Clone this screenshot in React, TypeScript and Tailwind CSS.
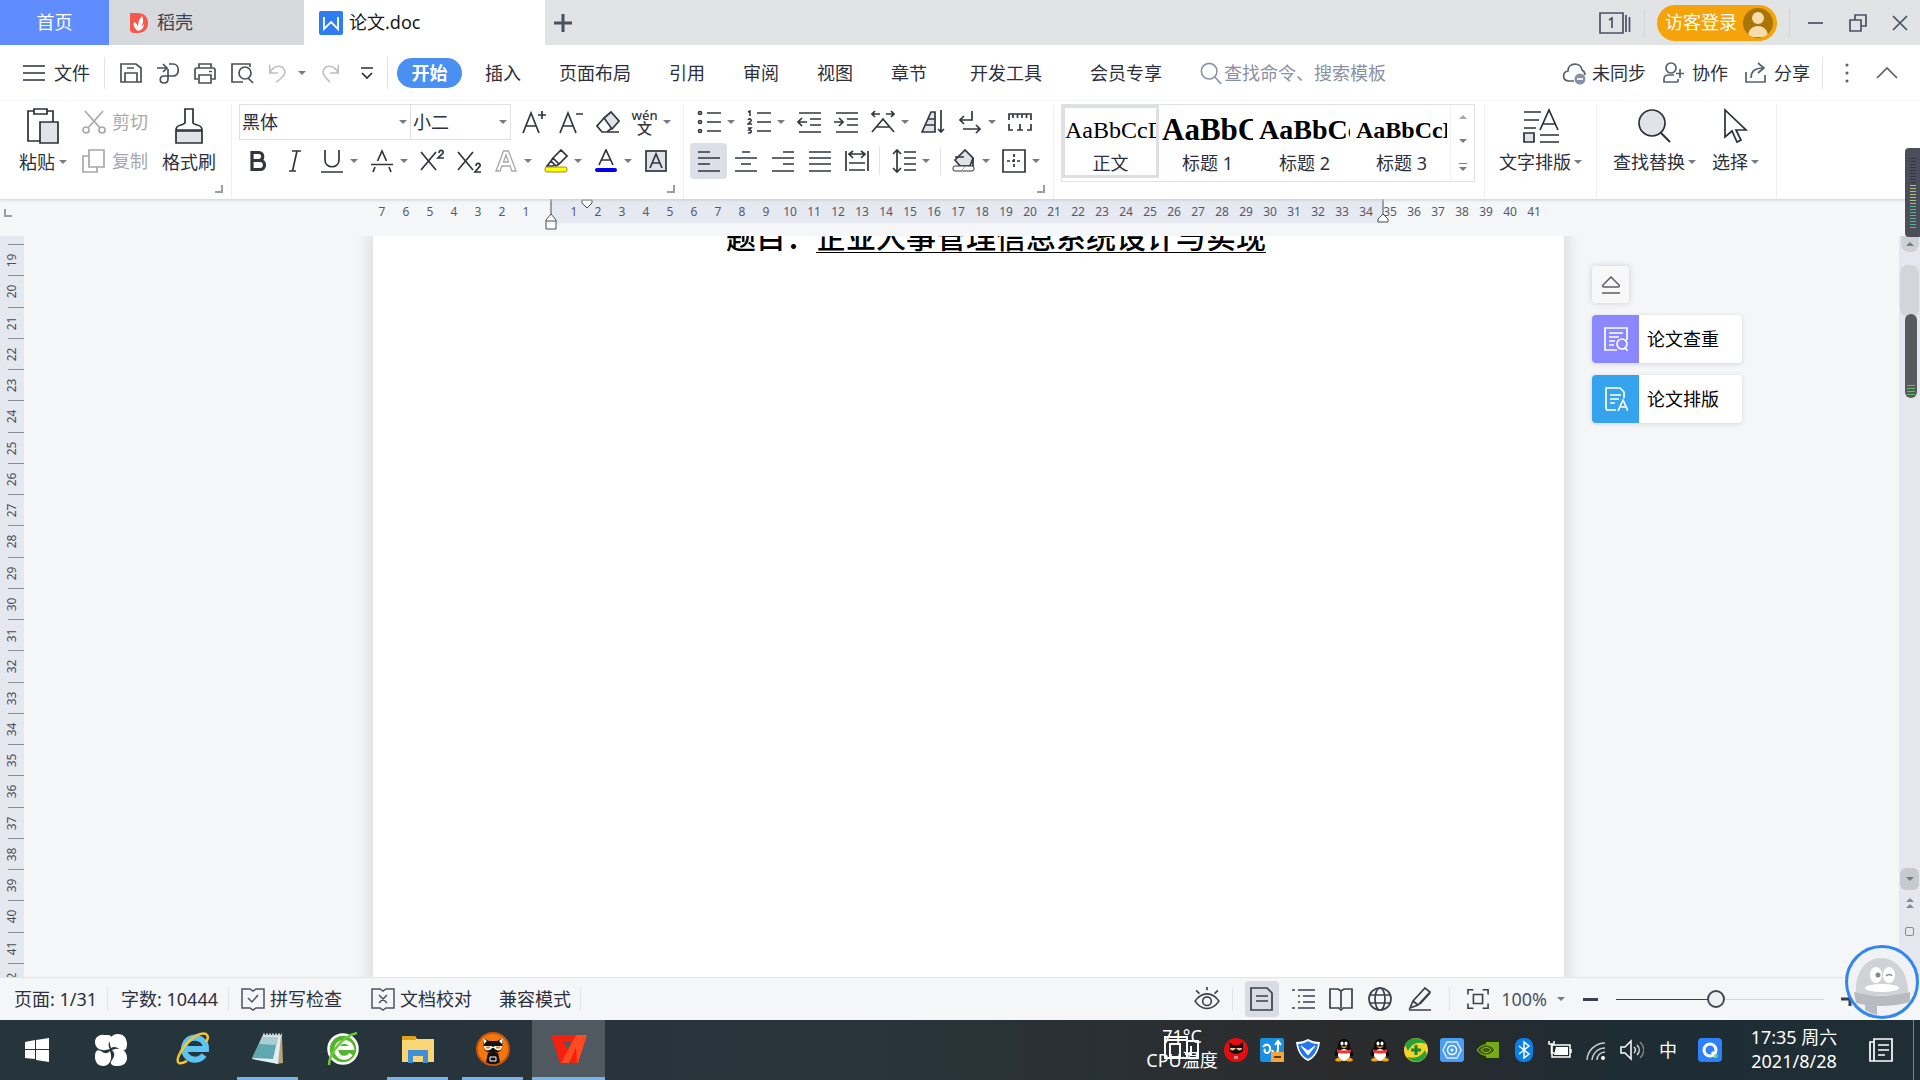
import React from "react";

type IconProps = {
  children: React.ReactNode;
  className?: string;
  box?: string;
};

const Icon = ({ children, className = "size-6", box = "0 0 24 24" }: IconProps) => (
  <svg
    viewBox={box}
    className={`shrink-0 ${className}`}
    fill="none"
    stroke="currentColor"
    strokeWidth="1.7"
    aria-hidden="true"
  >
    {children}
  </svg>
);

const Caret = ({ className = "text-[#777b84]" }: { className?: string }) => (
  <svg viewBox="0 0 8 4" className={`h-1 w-2 shrink-0 ${className}`} fill="currentColor" aria-hidden="true">
    <path d="M0 0h8L4 4z" />
  </svg>
);

type ToolProps = {
  label: string;
  caret?: boolean;
  active?: boolean;
  children: React.ReactNode;
};

const Tool = ({ label, caret, active, children }: ToolProps) => (
  <button aria-label={label} className="flex h-9 shrink-0 items-center text-[#33363f]">
    <span
      className={`flex h-9 w-[37px] items-center justify-center rounded-sm ${
        active ? "bg-[#dcdfe5]" : ""
      }`}
    >
      {children}
    </span>
    {caret && (
      <span className="flex w-[13px] justify-start">
        <Caret />
      </span>
    )}
  </button>
);

const Launcher = () => (
  <button aria-label="更多设置" className="absolute right-2 bottom-[6px]">
    <svg viewBox="0 0 8 8" className="size-2" fill="none" stroke="#9a9da5" strokeWidth="2" aria-hidden="true">
      <path d="M0 7h7V0" />
    </svg>
  </button>
);

const menuTabs = ["插入", "页面布局", "引用", "审阅", "视图", "章节"];

const styleItems = [
  { name: "正文", sample: "AaBbCcD", preview: "text-[24px]" },
  { name: "标题 1", sample: "AaBbC", preview: "text-[31px] font-bold" },
  { name: "标题 2", sample: "AaBbCc", preview: "text-[28px] font-bold" },
  { name: "标题 3", sample: "AaBbCcD", preview: "text-[24px] font-bold" },
];

const rulerMarks = [
  ...Array.from({ length: 7 }, (_, i) => String(7 - i)),
  "",
  ...Array.from({ length: 41 }, (_, i) => String(i + 1)),
];

const sideMarks = Array.from({ length: 24 }, (_, i) => i + 19);

const TitleBar = () => (
  <div className="flex h-[45px] shrink-0 items-center bg-[#e1e3e5] text-[18px]">
    <button className="h-full w-[109px] bg-[#5f8dff] text-white">首页</button>
    <button className="flex h-full w-[195px] items-center gap-2 bg-[#d8d9dd] pl-5 text-[#3c4152]">
      <svg viewBox="0 0 20 22" className="h-[22px] w-5" aria-hidden="true">
        <path d="M1 1h8c6 0 10 4 10 10s-4 10-10 10H5c-3 0-4-2-4-4z" fill="#f5594b" />
        <path d="M9 19c-4-3-5-6-4-9 2 1 3 2 4 5 0-4 1-8 4-11 2 4 1 8-1 11l3-3c0 3-2 6-6 7z" fill="#fff" />
      </svg>
      稻壳
    </button>
    <button className="flex h-full w-[241px] items-center gap-[6px] bg-white pl-[15px] text-[#16181d]">
      <svg viewBox="0 0 24 24" className="size-6" aria-hidden="true">
        <rect width="24" height="24" rx="2" fill="#2f7df0" />
        <path d="M5 6v12l7-7 7 7V6" fill="none" stroke="#fff" strokeWidth="1.800" />
      </svg>
      论文.doc
    </button>
    <button aria-label="新建标签" className="ml-2 text-[#4a4f63]">
      <Icon className="size-5" box="0 0 20 20">
        <path d="M10 1v18M1 10h18" strokeWidth="3" />
      </Icon>
    </button>
    <div className="ml-auto flex h-full items-center text-[#4a5068]">
      <button aria-label="窗口列表" className="mr-[13px]">
        <Icon className="h-[22px] w-8" box="0 0 32 22">
          <path d="M1 1h23v20H1zM27 3v17M30.500 5v15" />
          <path d="M10 8l3-2v10" />
        </Icon>
      </button>
      <div className="h-7 w-px bg-[#d2d4d8]" />
      <button className="mx-3 flex h-9 items-center gap-[6px] rounded-full bg-[#f5a30a] pr-1 pl-2 text-white">
        访客登录
        <svg viewBox="0 0 30 30" className="size-[30px]" aria-hidden="true">
          <clipPath id="avatar">
            <circle cx="15" cy="15" r="15" />
          </clipPath>
          <g clipPath="url(#avatar)">
            <rect width="30" height="30" fill="#a97408" />
            <circle cx="15" cy="10" r="6" fill="#f6dca6" />
            <path d="M5 29c0-7 4-11 10-11s10 4 10 11z" fill="#f6dca6" />
          </g>
        </svg>
      </button>
      <div className="h-7 w-px bg-[#d2d4d8]" />
      <button aria-label="最小化" className="ml-[18px]">
        <Icon className="size-4" box="0 0 16 16">
          <path d="M0 8h15" />
        </Icon>
      </button>
      <button aria-label="还原" className="ml-6">
        <Icon className="size-5" box="0 0 20 20">
          <path d="M2 7h11v11H2zM7 7V2h11v11h-5" />
        </Icon>
      </button>
      <button aria-label="关闭" className="mr-3 ml-6">
        <Icon className="size-4" box="0 0 16 16">
          <path d="M1 1l14 14M15 1L1 15" />
        </Icon>
      </button>
    </div>
  </div>
);

const MenuBar = () => (
  <div className="flex h-14 shrink-0 items-center bg-white text-[18px] text-[#2c303c]">
    <button className="ml-[23px] flex items-center gap-[9px]">
      <Icon className="h-5 w-[22px]" box="0 0 22 20">
        <path d="M0 3h22M0 10h22M0 17h22" />
      </Icon>
      文件
    </button>
    <div className="mr-[14px] ml-[14px] h-8 w-px bg-[#e2e3e6]" />
    <div className="flex items-center gap-[13px] text-[#4d5058]">
      <button aria-label="保存">
        <Icon>
          <path d="M2 3h15l5 4v14H2zM6 21v-9h12v9M8 7h7" />
        </Icon>
      </button>
      <button aria-label="输出">
        <Icon>
          <path d="M1 7h9M7 3l4 4-4 4M13 3h4c7 0 7 12 0 12H8c-5 0-5 7 0 7 3 0 4-1 4-4V8" />
        </Icon>
      </button>
      <button aria-label="打印">
        <Icon>
          <path d="M6 7V3h12v4M5 18H2V9c0-1 1-2 2-2h16c1 0 2 1 2 2v9h-3M6 14h12v8H6zM16 10.500h3" />
        </Icon>
      </button>
      <button aria-label="打印预览">
        <Icon>
          <path d="M13 21H2V3h18v3M18 17l5 5" />
          <circle cx="15" cy="12" r="6" />
        </Icon>
      </button>
      <button aria-label="撤销" className="flex items-center gap-[9px] text-[#bcbec4]">
        <Icon className="size-[22px]">
          <path d="M3 3v9h9M3 12C7 4 15 3 18 7c4 5 0 9-8 15" />
        </Icon>
        <Caret />
      </button>
      <button aria-label="恢复" className="text-[#bcbec4]">
        <Icon className="size-[22px]">
          <path d="M21 3v9h-9M21 12C17 4 9 3 6 7c-4 5 0 9 6 15" />
        </Icon>
      </button>
    </div>
    <button aria-label="自定义" className="ml-5">
      <Icon className="h-4 w-3" box="0 0 12 16">
        <path d="M0 3h12M1 8l5 5 5-5" />
      </Icon>
    </button>
    <div className="mr-[9px] ml-[14px] h-8 w-px bg-[#e2e3e6]" />
    <button className="mr-1 h-[30px] w-[65px] rounded-full bg-[#4a8ff2] font-bold text-white">开始</button>
    {menuTabs.map((tab) => (
      <button key={tab} className="px-[19px] whitespace-nowrap">
        {tab}
      </button>
    ))}
    <button className="px-6 whitespace-nowrap">开发工具</button>
    <button className="px-6 whitespace-nowrap">会员专享</button>
    <label className="ml-[14px] flex items-center gap-[2px] text-[#8a91a3]">
      <Icon className="size-[22px]">
        <circle cx="10" cy="10" r="8.500" />
        <path d="M16 16l7 8" />
      </Icon>
      <input
        aria-label="搜索"
        placeholder="查找命令、搜索模板"
        className="w-44 bg-transparent outline-none placeholder:text-[#8a91a3]"
      />
    </label>
    <div className="ml-auto flex items-center whitespace-nowrap">
      <button className="flex items-center gap-[6px]">
        <Icon className="size-6 text-[#5b6070]">
          <path d="M12 20H7c-7 0-7-9-1-10C6 1 19 1 20 9c2 1 3 3 3 5" />
          <circle cx="18" cy="18" r="5.500" fill="#8790a8" stroke="none" />
          <path d="M15 18h6" stroke="#fff" />
        </Icon>
        未同步
      </button>
      <button className="ml-4 flex items-center gap-[6px]">
        <Icon className="size-6 text-[#5b6070]">
          <circle cx="9" cy="7" r="5" />
          <path d="M16 21H2v-3c0-3 2-4 5-4h5M18 8v9M14 12.500h8M16 18v3" />
        </Icon>
        协作
      </button>
      <button className="ml-4 flex items-center gap-[6px]">
        <Icon className="size-6 text-[#5b6070]">
          <path d="M2 11v10h19v-7M7 17c0-7 4-10 12-10M14 2l6 5-6 5" />
        </Icon>
        分享
      </button>
      <div className="ml-3 h-8 w-px bg-[#e2e3e6]" />
      <button aria-label="更多" className="ml-[22px]">
        <svg viewBox="0 0 4 20" className="h-5 w-1" fill="#5b6070" aria-hidden="true">
          <circle cx="2" cy="2" r="1.500" />
          <circle cx="2" cy="10" r="1.500" />
          <circle cx="2" cy="18" r="1.500" />
        </svg>
      </button>
      <button aria-label="收起功能区" className="mr-[22px] ml-[27px]">
        <Icon className="h-3 w-[22px] text-[#5b6070]" box="0 0 22 12">
          <path d="M1 11L11 1l10 10" />
        </Icon>
      </button>
    </div>
  </div>
);

const ClipboardGroup = () => (
  <div className="relative flex w-[232px] shrink-0 border-r border-[#eeeff2] pl-[19px]">
    <button className="flex flex-col items-center pt-1">
      <Icon className="h-9 w-8" box="0 0 32 36">
        <path d="M7 3H1v30h12M20 3h6v11" />
        <path d="M7 1h13v5H7z" />
        <path d="M13 14h18v21H13z" fill="#e1e3e8" />
      </Icon>
      <span className="mt-[5px] flex items-center gap-1">
        粘贴
        <Caret />
      </span>
    </button>
    <div className="ml-[15px] flex flex-col gap-[3px] text-[#a6a8ad]">
      <button className="flex h-9 items-center gap-[6px]">
        <Icon>
          <path d="M3 1l15 17M21 1L6 18" />
          <circle cx="4" cy="20" r="3" />
          <circle cx="20" cy="20" r="3" />
        </Icon>
        剪切
      </button>
      <button className="flex h-9 items-center gap-[6px]">
        <Icon>
          <path d="M7 1h15v17H7zM7 7H1v16h14v-5" />
        </Icon>
        复制
      </button>
    </div>
    <button className="ml-[14px] flex flex-col items-center pt-1">
      <Icon className="h-9 w-7" box="0 0 28 36">
        <path d="M10 1h8v14c3 3 9 1 9 7H1c0-6 6-4 9-7z" />
        <path d="M1 23h26v12H1z" fill="#e1e3e8" />
      </Icon>
      <span className="mt-[5px]">格式刷</span>
    </button>
    <Launcher />
  </div>
);

const FontGroup = () => (
  <div className="relative shrink-0 border-r border-[#eeeff2] pr-[7px] pl-[7px]">
    <div className="mb-[3px] flex h-9 items-center">
      <div className="mr-1 flex h-9 border border-[#e0e1e4]">
        <label className="flex w-[171px] items-center border-r border-[#e0e1e4] pr-[3px]">
          <select aria-label="字体" className="w-full appearance-none bg-transparent pl-[2px] outline-none">
            <option>黑体</option>
          </select>
          <Caret />
        </label>
        <label className="flex w-[99px] items-center pr-[3px]">
          <select aria-label="字号" className="w-full appearance-none bg-transparent pl-[2px] outline-none">
            <option>小二</option>
          </select>
          <Caret />
        </label>
      </div>
      <Tool label="增大字号">
        <Icon>
          <path d="M1 23L9 3l8 20M4 16h10M20 1v8M16 5h8" />
        </Icon>
      </Tool>
      <Tool label="减小字号">
        <Icon>
          <path d="M1 23L9 3l8 20M4 16h10M17 4h7" />
        </Icon>
      </Tool>
      <Tool label="清除格式">
        <Icon>
          <path d="M8 8l7-6 8 9-7 8z" fill="#e1e3e8" />
          <path d="M8 8l-7 8 5 6h5l5-4M6 22h17" />
        </Icon>
      </Tool>
      <Tool label="拼音指南" caret>
        <span className="flex flex-col items-center text-[13px] leading-[11px] font-medium">
          <span>wén</span>
          <span className="text-[15px] leading-[14px]">文</span>
        </span>
      </Tool>
    </div>
    <div className="flex">
      <Tool label="加粗">
        <Icon>
          <path d="M6 3.500h7c5 0 5 8 0 8H6zM6 11.500h8c6 0 6 9 0 9H6z" strokeWidth="3.200" />
        </Icon>
      </Tool>
      <Tool label="倾斜">
        <Icon>
          <path d="M9 2h9M6 22h7M14 2l-4.500 20" />
        </Icon>
      </Tool>
      <Tool label="下划线" caret>
        <Icon>
          <path d="M5 1v10c0 9 14 9 14 0V1M1 23h22" />
        </Icon>
      </Tool>
      <Tool label="删除线" caret>
        <Icon>
          <path d="M7.500 12L12 2l4.500 10M5 18l-2 5M19 18l2 5M1 15.500h22" />
        </Icon>
      </Tool>
      <Tool label="上标">
        <Icon>
          <path d="M1 3l15 18M16 3L1 21M19 4c0-4 5-3 4 0l-5 5h6" />
        </Icon>
      </Tool>
      <Tool label="下标">
        <Icon>
          <path d="M1 3l15 18M16 3L1 21M19 17c0-4 5-3 4 0l-5 6h6" />
        </Icon>
      </Tool>
      <Tool label="文字效果" caret>
        <Icon className="size-6 text-[#a6a8ad]">
          <path d="M2 22L9.500 2h5L22 22h-4l-2-5H8l-2 5zM9.500 13h5L12 6z" strokeWidth="1.300" />
        </Icon>
      </Tool>
      <Tool label="突出显示" caret>
        <Icon>
          <path d="M9 9l8-8 6 6-8 8zM9 9l-2 3 5 5 3-2M7 12l-4 5h6l2-2" />
          <rect x="1" y="18" width="22" height="5" rx="2" fill="#ffff00" stroke="#8f8f20" strokeWidth="1" />
        </Icon>
      </Tool>
      <Tool label="字体颜色" caret>
        <Icon>
          <path d="M5 16l7-15 7 15M7 11h10" />
          <rect x="1" y="19" width="22" height="4" rx="2" fill="#0000f0" stroke="none" />
        </Icon>
      </Tool>
      <Tool label="字符底纹">
        <Icon>
          <rect x="2" y="2" width="20" height="20" fill="#e1e3e8" />
          <path d="M6 19l6-14 6 14M8.500 14h7" />
        </Icon>
      </Tool>
    </div>
    <Launcher />
  </div>
);

const ParagraphGroup = () => (
  <div className="relative shrink-0 border-r border-[#eeeff2] pr-2 pl-[6px]">
    <div className="mb-[3px] flex">
      <Tool label="项目符号" caret>
        <Icon>
          <path d="M10 3h14M10 12h14M10 21h14" />
          <circle cx="3" cy="3" r="1.500" />
          <circle cx="3" cy="12" r="1.500" />
          <circle cx="3" cy="21" r="1.500" />
        </Icon>
      </Tool>
      <Tool label="编号" caret>
        <Icon>
          <path d="M10 3h14M10 12h14M10 21h14" />
          <path d="M1 2l2-1v5M1 10c1-2 4-1 3 1l-3 3h4M1 18h3l-2 2c3 0 3 3 0 3H1" strokeWidth="1.500" />
        </Icon>
      </Tool>
      <Tool label="减少缩进">
        <Icon>
          <path d="M2 3h22M13 9h11M13 15h11M2 22h22M10 12H1M5 8l-4 4 4 4" />
        </Icon>
      </Tool>
      <Tool label="增加缩进">
        <Icon>
          <path d="M2 3h22M13 9h11M13 15h11M2 22h22M0 12h9M5 8l4 4-4 4" />
        </Icon>
      </Tool>
      <Tool label="中文版式" caret>
        <Icon>
          <path d="M1 22L12 9l11 13M6 17h12M9 4H1M4 1L1 4l3 3M15 4h8M20 1l3 3-3 3" />
        </Icon>
      </Tool>
      <Tool label="排序">
        <Icon>
          <path d="M1 22L10 2h4v20z" fill="#e1e3e8" />
          <path d="M7 9h7M4 15h10M20 0v22M17 19l3 3 3-3" />
        </Icon>
      </Tool>
      <Tool label="换行" caret>
        <Icon>
          <path d="M14 1v9H2M6 6l-4 4 4 4M5 19h17M18 15l4 4-4 4" />
        </Icon>
      </Tool>
      <Tool label="显示标尺">
        <Icon>
          <path d="M1 10V4h22v6M5 4v4M9.500 4v4M14 4v4M18.500 4v4M1 14v6h4M23 14v6h-4M12 14v6M9 20h6" />
        </Icon>
      </Tool>
    </div>
    <div className="flex items-center">
      <Tool label="左对齐" active>
        <Icon>
          <path d="M1 3h12M1 9h22M1 15h12M1 22h22" />
        </Icon>
      </Tool>
      <Tool label="居中对齐">
        <Icon>
          <path d="M8 3h8M1 9h22M7 15h10M1 22h22" />
        </Icon>
      </Tool>
      <Tool label="右对齐">
        <Icon>
          <path d="M12 3h11M1 9h22M12 15h11M1 22h22" />
        </Icon>
      </Tool>
      <Tool label="两端对齐">
        <Icon>
          <path d="M1 3h22M1 9h22M1 15h22M1 22h22" />
        </Icon>
      </Tool>
      <Tool label="分散对齐">
        <Icon>
          <path d="M1 2v20M23 2v20M4 14h16M4 21h16M4 5h16M8 2L4 5l4 4M16 2l4 3-4 4" />
        </Icon>
      </Tool>
      <div className="mr-[5px] ml-1 h-7 w-px bg-[#e2e3e6]" />
      <Tool label="行距" caret>
        <Icon>
          <path d="M5 2v20M1 5l4-4 4 4M1 19l4 4 4-4M12 3h12M12 9h12M12 15h12M12 21h12" />
        </Icon>
      </Tool>
      <div className="mr-1 ml-[5px] h-7 w-px bg-[#e2e3e6]" />
      <Tool label="底纹颜色" caret>
        <Icon>
          <path d="M3 11l10-10 8 8-3 8H8z" fill="#e1e3e8" />
          <path d="M3 8h9M21 9v9" />
          <rect x="1" y="17" width="21" height="5" rx="2" fill="#fff" strokeWidth="1" />
          <path d="M9 22l5-5" stroke="#c58d8d" strokeWidth="1" />
        </Icon>
      </Tool>
      <Tool label="边框" caret>
        <Icon>
          <path d="M1 1h22v22H1z" />
          <path d="M12 5v14M5 12h14" strokeDasharray="3 2" />
        </Icon>
      </Tool>
    </div>
    <Launcher />
  </div>
);

const StylesGroup = () => (
  <div className="shrink-0 border-r border-[#eeeff2] pr-[9px] pl-[7px]">
    <div className="flex h-[78px] border border-[#e0e1e4]">
      {styleItems.map((item, index) => (
        <button
          key={item.name}
          className={`flex h-[73px] w-[97px] flex-col items-center border-[3px] ${
            index === 0 ? "border-[#dddfe4]" : "border-transparent"
          }`}
        >
          <span
            className={`block h-[43px] w-full overflow-hidden text-left font-['Liberation_Serif',serif] leading-[44px] whitespace-nowrap text-black ${item.preview}`}
          >
            {item.sample}
          </span>
          <span className="leading-6">{item.name}</span>
        </button>
      ))}
      <div className="flex w-6 flex-col items-center justify-around border-l border-[#f0f1f3] text-[#777b84]">
        <button aria-label="上一行" className="rotate-180">
          <Caret className="text-[#a6a8ad]" />
        </button>
        <button aria-label="下一行">
          <Caret />
        </button>
        <button aria-label="更多样式" className="flex flex-col items-center gap-[3px]">
          <span className="h-px w-2 bg-[#777b84]" />
          <Caret />
        </button>
      </div>
    </div>
  </div>
);

const Ribbon = () => (
  <div className="relative z-10 flex h-[98px] shrink-0 bg-white pt-[3px] text-[18px] leading-[26px] whitespace-nowrap text-[#2c303c] shadow-[0_1px_3px_#c9ccd2]">
    <ClipboardGroup />
    <FontGroup />
    <ParagraphGroup />
    <StylesGroup />
    <div className="shrink-0 border-r border-[#eeeff2] px-[14px] pt-1">
      <button className="flex flex-col items-center">
        <Icon className="h-9 w-9" box="0 0 36 36">
          <path d="M1 4h17M1 12h15M1 20h12M17 22L26 2l9 20M20 16h12M17 27h19M17 34h19" />
          <path d="M1 25h10v9H1z" fill="#e1e3e8" />
        </Icon>
        <span className="mt-[5px] flex items-center gap-[3px]">
          文字排版
          <Caret />
        </span>
      </button>
    </div>
    <div className="flex shrink-0 gap-4 border-r border-[#eeeff2] pt-1 pr-[17px] pl-[16px]">
      <button className="flex flex-col items-center">
        <Icon className="h-9 w-9" box="0 0 36 36">
          <circle cx="15" cy="15" r="13" fill="#e1e3e8" />
          <path d="M24 25l9 9" strokeWidth="2" />
        </Icon>
        <span className="mt-[5px] flex items-center gap-[3px]">
          查找替换
          <Caret />
        </span>
      </button>
      <button className="flex flex-col items-center">
        <Icon className="h-9 w-9" box="0 0 36 36">
          <path d="M7 2v27l7-6 5 11 4-2-5-10h10z" />
        </Icon>
        <span className="mt-[5px] flex items-center gap-[3px]">
          选择
          <Caret />
        </span>
      </button>
    </div>
  </div>
);

const HorizontalRuler = () => (
  <div className="flex h-[37px] shrink-0 justify-center bg-[#f5f6f8] pr-1 text-[12px] text-[#565a66]">
    <div className="relative flex h-6">
      <div className="absolute inset-y-0 right-[163px] left-[181px] bg-[#e6e8f2]" />
      {rulerMarks.map((mark, i) => (
        <span key={i} className="relative flex w-6 items-center justify-center pt-[2px]">
          {mark}
        </span>
      ))}
      <Icon className="absolute top-0 left-[175px] h-8 w-3 text-[#4a4d55]" box="0 0 12 32">
        <path d="M6 0v15M1 21l5-6 5 6v9H1zM1 22h10" strokeWidth="1" fill="#fff" />
      </Icon>
      <Icon className="absolute top-0 left-[211px] h-3 w-3 text-[#4a4d55]" box="0 0 12 12">
        <path d="M1 1h10v3L6 9 1 4z" strokeWidth="1" fill="#fff" />
      </Icon>
      <Icon className="absolute top-0 right-[157px] h-6 w-3 text-[#4a4d55]" box="0 0 12 24">
        <path d="M6 0v15M1 20l5-5 5 5v3H1z" strokeWidth="1" fill="#fff" />
      </Icon>
    </div>
    {/* tab stop selector in the ruler corner */}
    <svg
      viewBox="0 0 8 8"
      className="absolute left-1 mt-[10px] size-2"
      fill="none"
      stroke="#9a9da5"
      strokeWidth="2"
      aria-hidden="true"
    >
      <path d="M1 0v7h7" />
    </svg>
  </div>
);

const SidePanel = () => (
  <div className="flex flex-col items-start gap-3 pt-[30px] pl-7 text-[18px] text-black">
    <button
      aria-label="收起"
      className="flex h-[37px] w-[37px] items-center justify-center rounded-sm bg-[#f8f8f9] text-[#5b5d63] shadow-[0_0_6px_#c9ccd2]"
    >
      <Icon className="size-5" box="0 0 20 20">
        <path d="M10 2l8 8c1 1 0 2-1 2H3c-1 0-2-1-1-2zM1 18h18" strokeWidth="1.500" />
      </Icon>
    </button>
    <button className="flex h-12 w-[150px] items-center overflow-hidden rounded bg-white shadow-[0_1px_5px_#d3d5da]">
      <span className="flex h-full w-[47px] items-center justify-center bg-[#8b87ff] text-white">
        <Icon>
          <path d="M13 23H1V1h22v12M5 6h14M5 10h10M5 14h6M5 18h5M21 21l3 3" />
          <circle cx="18" cy="17" r="5" />
        </Icon>
      </span>
      <span className="ml-2">论文查重</span>
    </button>
    <button className="flex h-12 w-[150px] items-center overflow-hidden rounded bg-white shadow-[0_1px_5px_#d3d5da]">
      <span className="flex h-full w-[47px] items-center justify-center bg-[#35a4ec] text-white">
        <Icon>
          <path d="M12 23H4c-1 0-2-1-2-2V1h14l4 4v6M6 8h11M6 12h9M6 16h5M14 24l5-11 5 11M16 20h6" />
        </Icon>
      </span>
      <span className="ml-2">论文排版</span>
    </button>
  </div>
);

const Workspace = () => (
  <div className="flex min-h-0 flex-1 bg-[#f5f6f8]">
    <div className="w-6 shrink-0 overflow-hidden bg-[#e6e8f0] pt-2">
      <div className="flex h-[750px] flex-col text-[12px] text-[#4a4d58]">
        {sideMarks.map((mark) => (
          <div key={mark} className="flex flex-1 flex-col items-center">
            <div className="h-px w-4 self-end bg-[#8d909b]" />
            <span className="flex flex-1 rotate-180 items-center justify-center [writing-mode:vertical-rl]">
              {mark}
            </span>
          </div>
        ))}
      </div>
    </div>
    <div className="flex flex-1 overflow-hidden pl-[14px]">
      <div className="flex-1" />
      <div className="w-[1191px] shrink-0 overflow-hidden bg-white shadow-[0_0_12px_6px_#dfe0e3]">
        <p className="-mt-[19px] pr-[298px] text-right font-['Noto_Sans_CJK_SC',sans-serif] text-[30px] leading-9 font-medium text-black">
          题目：
          <span className="underline decoration-1 underline-offset-4">企业人事管理信息系统设计与实现</span>
        </p>
      </div>
      <div className="flex-1">
        <SidePanel />
      </div>
    </div>
    <div className="relative flex w-[21px] shrink-0 flex-col items-center bg-[#e6e7ee] text-[#868a96]">
      <button aria-label="向上滚动" className="flex h-4 w-[18px] rotate-180 items-center justify-center rounded-t-lg bg-[#cdd0d6]">
        <Caret />
      </button>
      <div className="mt-[13px] h-[52px] w-[19px] rounded-lg bg-[#d3d5db]" />
      <div className="absolute top-[78px] right-[3px] flex h-[84px] w-3 flex-col justify-end gap-[2px] rounded-md bg-[#58595c] px-[2px] pb-[3px]">
        <span className="h-px bg-[#4fc46a]" />
        <span className="h-px bg-[#4fc46a]" />
        <span className="h-px bg-[#4fc46a]" />
        <span className="h-px bg-[#4fc46a]" />
      </div>
      <button aria-label="向下滚动" className="mt-auto flex h-[22px] w-[19px] items-center justify-center rounded-md bg-[#c6c9cf]">
        <Caret />
      </button>
      <button aria-label="上一页" className="mt-2 flex flex-col gap-[2px]">
        <Caret className="rotate-180" />
        <Caret className="rotate-180" />
      </button>
      <button aria-label="选择浏览对象" className="mt-[19px] mb-[41px] size-[9px] rounded-xs border border-[#868a96]" />
    </div>
  </div>
);

const StatusBar = () => (
  <div className="flex h-[43px] shrink-0 items-center border-t border-[#e2e3e6] bg-[#f5f6f8] text-[18px] whitespace-nowrap text-[#2c303c]">
    <span className="w-[107px] pl-[14px]">页面: 1/31</span>
    <span className="h-6 w-px bg-[#e2e3e6]" />
    <span className="w-[120px] pl-[13px]">字数: 10444</span>
    <span className="h-6 w-px bg-[#e2e3e6]" />
    <button className="ml-3 flex w-[130px] items-center gap-[5px]">
      <Icon className="size-6 text-[#4d5263]">
        <path d="M1 2h8l3 2 3-2h8v19h-8l-3 2-3-2H1zM7 11l4 4 6-7" strokeWidth="1.500" />
      </Icon>
      拼写检查
    </button>
    <button className="flex w-[128px] items-center gap-[5px]">
      <Icon className="size-6 text-[#4d5263]">
        <path d="M1 2h8l3 2 3-2h8v19h-8l-3 2-3-2H1zM8 8l8 8M16 8l-8 8" strokeWidth="1.500" />
      </Icon>
      文档校对
    </button>
    <span className="pr-[9px]">兼容模式</span>
    <span className="h-6 w-px bg-[#e2e3e6]" />

    <div className="mr-[60px] ml-auto flex items-center text-[#3b3f4c]">
      <button aria-label="护眼模式">
        <Icon className="size-[26px]">
          <path d="M1 14c6-9 16-9 22 0-6 9-16 9-22 0zM12 1v3M2 4l3 3M22 4l-3 3" strokeWidth="1.500" />
          <circle cx="12" cy="14" r="4" strokeWidth="1.500" />
        </Icon>
      </button>
      <span className="mx-3 h-6 w-px bg-[#e2e3e6]" />
      <button aria-label="页面视图" className="flex h-9 w-[34px] items-center justify-center rounded-sm bg-[#d9dce3]">
        <Icon>
          <path d="M1 1h16l5 5v17H1zM6 9h12M6 14h12" />
        </Icon>
      </button>
      <button aria-label="大纲" className="ml-3">
        <Icon>
          <path d="M1 3h3M7 3h17M7 9h2M12 9h12M7 15h2M12 15h12M1 21h3M7 21h17" />
        </Icon>
      </button>
      <button aria-label="阅读版式" className="ml-[14px]">
        <Icon>
          <path d="M1 2h8l3 2 3-2h8v19h-9l-2 2-2-2H1zM12 4v17" />
        </Icon>
      </button>
      <button aria-label="Web版式" className="ml-[15px]">
        <Icon>
          <circle cx="12" cy="12" r="11" />
          <ellipse cx="12" cy="12" rx="5" ry="11" />
          <path d="M2 8h20M2 16h20" />
        </Icon>
      </button>
      <button aria-label="写作模式" className="ml-4">
        <Icon>
          <path d="M1 23h22M2 21l3-7L17 1l5 4L10 18zM5 14l5 4M12 17L22 6" />
        </Icon>
      </button>
      <span className="mx-[17px] h-6 w-px bg-[#e2e3e6]" />
      <button aria-label="全屏显示">
        <Icon className="size-[22px]">
          <path d="M1 7V2h6M17 2h6v5M23 17v5h-6M7 22H1v-5M7 7h10v10H7z" />
        </Icon>
      </button>
      <button className="ml-3 flex items-center gap-[10px] text-[#4d5263]">
        100%
        <Caret />
      </button>
      <button aria-label="缩小" className="ml-[18px] h-[3px] w-[15px] bg-[#3b3f52]" />
      <input
        type="range"
        aria-label="显示比例"
        defaultValue={48}
        className="ml-[18px] h-5 w-[208px] appearance-none bg-[linear-gradient(90deg,#3b3f4c_48%,#d5d6da_48%)] bg-[length:100%_1px] bg-center bg-no-repeat [&::-webkit-slider-thumb]:size-[18px] [&::-webkit-slider-thumb]:appearance-none [&::-webkit-slider-thumb]:rounded-full [&::-webkit-slider-thumb]:border-2 [&::-webkit-slider-thumb]:border-[#44474f] [&::-webkit-slider-thumb]:bg-[#f0f0f1]"
      />
      <button aria-label="放大" className="ml-4">
        <Icon className="size-5" box="0 0 20 20">
          <path d="M10 3v14M1 10h18" strokeWidth="3" />
        </Icon>
      </button>
    </div>
  </div>
);

const taskApps = [
  {
    name: "Internet Explorer",
    running: false,
    icon: (
      <>
        <path d="M28 23a11 11 0 1 1 2-6H11" stroke="#5cc3f2" strokeWidth="6" />
        <path d="M3 31C-4 27 18-3 30 2c3 2 2 5 0 8M3 31c3 1 6-1 8-2" stroke="#f4c52c" strokeWidth="2.500" />
      </>
    ),
  },
  {
    name: "记事本",
    running: true,
    icon: (
      <>
        <path d="M13 4h18l1 27-7 1z" fill="#b9a27a" stroke="none" />
        <path d="M12 3h18l-3 29-26-5z" fill="#e4eef0" stroke="none" />
        <path d="M11 5h16l-5 22-21-1z" fill="#5fa7b1" stroke="none" />
        <path d="M11 5h16l-2 8L8 12z" fill="#a9cdd3" stroke="none" />
        <path d="M12 3h19" stroke="#ccd5d6" strokeWidth="3" strokeDasharray="2 1" />
      </>
    ),
  },
  {
    name: "360浏览器",
    running: false,
    icon: (
      <>
        <circle cx="17" cy="17" r="14.500" fill="#55b52c" stroke="#fff" strokeWidth="2.500" />
        <path d="M25 22a8 8 0 1 1 1-6H10" stroke="#fff" strokeWidth="4" />
        <path d="M3 33C3 21 17 4 31 1" stroke="#6cc83c" strokeWidth="2.500" />
      </>
    ),
  },
  {
    name: "文件资源管理器",
    running: true,
    icon: (
      <>
        <path d="M1 4h13l2 3h17v23H1z" fill="#f9d673" stroke="none" />
        <path d="M1 4h13l1 4H1z" fill="#e0a21d" stroke="none" />
        <path d="M7 31V18h20v13h-5v-7H12v7z" fill="#3f8fd6" stroke="none" />
      </>
    ),
  },
  {
    name: "黑猫",
    running: true,
    icon: (
      <>
        <circle cx="17" cy="17" r="16" fill="#f5770e" stroke="#c9540a" strokeWidth="2" />
        <path d="M7 6l6 3h8l6-3-1 10c-1 4-5 5-9 5s-8-1-9-5zM12 21h10l2 9c-4 3-10 3-14 0z" fill="#151210" stroke="none" />
        <path d="M7 6l4 3-3 3zM27 6l-4 3 3 3z" fill="#fff" stroke="none" />
        <path d="M8 14h7l2 1 2-1h7c0 6-6 5-8 2h-2c-2 3-8 4-8-2z" fill="#fff" stroke="none" />
        <path d="M10 15.500h4M20 15.500h4" stroke="#f5770e" strokeWidth="2" />
        <path d="M14 25h6v4h-6z" stroke="#fff" strokeWidth="1" />
      </>
    ),
  },
];

const trayIcons = [
  {
    name: "安全卫士",
    icon: (
      <>
        <circle cx="12" cy="12" r="12" fill="#e80d0d" />
        <path d="M5 4l4 3h6l4-3v8c-1 5-13 5-14 0z" fill="#171010" />
        <path d="M6 10h5l1 1 1-1h5c0 3-4 3-5 1h-2c-1 2-5 2-5-1z" fill="#f2c49c" />
        <path d="M10 18h4v3h-4z" fill="#b98f8f" />
      </>
    ),
  },
  {
    name: "传输",
    icon: (
      <>
        <rect width="24" height="24" rx="2" fill="#1b8fe0" />
        <path d="M3 9c4-5 8-1 7 3-1 5-7 3-5-1M12 12c2 5 6 4 6-1V4M15 7l3-4 3 4" fill="none" stroke="#fff" strokeWidth="2" />
        <rect x="11" y="14" width="13" height="10" fill="#f5a33a" />
        <path d="M14 19h7" stroke="#5a3a10" strokeWidth="2" />
      </>
    ),
  },
  {
    name: "电脑管家",
    icon: (
      <>
        <path d="M0 4c5 0 8-1 12-3 4 2 7 3 12 3-1 9-5 16-12 19C5 20 1 13 0 4z" fill="#fff" />
        <path d="M2 6c4 0 7-1 10-3 3 2 6 3 10 3-1 7-4 12-10 15C6 18 3 13 2 6z" fill="#2277f2" />
        <path d="M5 8l7 5 7-5-7 9z" fill="#fff" stroke="#fff" />
      </>
    ),
  },
  { name: "QQ", icon: "penguin" },
  { name: "QQ 小号", icon: "penguin" },
  {
    name: "360",
    icon: (
      <>
        <circle cx="12" cy="12" r="12" fill="#f6d22a" />
        <path d="M1 7A12 12 0 0 1 22 6c-8-3-14-1-18 7zM23 17A12 12 0 0 1 3 19c8 2 14 0 18-7z" fill="#27a03b" />
        <path d="M12 7v10M7 12h10" stroke="#14882e" strokeWidth="3" />
      </>
    ),
  },
  {
    name: "网盘",
    icon: (
      <>
        <rect width="24" height="24" rx="3" fill="#4a9cf5" />
        <path d="M7 4h10l4 8-4 8H7l-4-8z" fill="none" stroke="#d9ecff" strokeWidth="1.500" />
        <circle cx="12" cy="12" r="4.500" fill="none" stroke="#fff" strokeWidth="1.500" />
        <circle cx="12" cy="12" r="1.500" fill="#fff" />
      </>
    ),
  },
  {
    name: "NVIDIA",
    icon: (
      <>
        <path d="M2 2h21v19H2z" fill="#23301c" />
        <path d="M10 4h13v16H10z" fill="#77a916" />
        <path d="M1 12c5-7 14-7 18 0-5 7-13 7-18 0zM5 12c4-4 8-3 10 0-3 4-7 3-10 0z" fill="#3f5e10" stroke="#8fc12a" />
      </>
    ),
  },
  {
    name: "蓝牙",
    icon: (
      <>
        <rect x="3" y="0" width="18" height="24" rx="8" fill="#0a7fe6" />
        <path d="M7 8l10 8-5 4V4l5 4-10 8" fill="none" stroke="#fff" strokeWidth="1.500" />
      </>
    ),
  },
  {
    name: "电池",
    icon: (
      <>
        <path d="M4 7h18v12H4zM23 11v4" fill="none" stroke="#fff" strokeWidth="1.500" />
        <path d="M8 9h12v8H6z" fill="#fff" />
        <path d="M1 3v3h5V3M3.500 6v9h3" fill="none" stroke="#fff" strokeWidth="1.500" />
      </>
    ),
  },
  {
    name: "网络",
    icon: (
      <>
        <path d="M3 22A18 18 0 0 1 21 5M8 22A13 13 0 0 1 21 10M13 22a8 8 0 0 1 8-8" fill="none" stroke="#c7cdd0" strokeWidth="1.500" />
        <circle cx="19" cy="20" r="2" fill="#fff" />
      </>
    ),
  },
  {
    name: "音量",
    icon: (
      <>
        <path d="M1 9h4l6-6v18l-6-6H1z" fill="none" stroke="#fff" strokeWidth="1.500" />
        <path d="M14 9c2 2 2 4 0 6M17 7c3 3 3 7 0 10" fill="none" stroke="#d5dadd" strokeWidth="1.500" />
        <path d="M20 4c5 5 5 11 0 16" fill="none" stroke="#7b858a" strokeWidth="1.500" />
      </>
    ),
  },
];

const Penguin = () => (
  <>
    <path d="M6 9c0-11 12-11 12 0 2 3 4 6 3 9H3c-1-3 1-6 3-9z" fill="#0b0b0b" />
    <ellipse cx="12" cy="17" rx="6" ry="6" fill="#fff" />
    <path d="M5 11c4 2 10 2 14 0v3c-4 2-10 2-14 0z" fill="#e33" />
    <ellipse cx="10" cy="5.500" rx="1.500" ry="2" fill="#fff" />
    <ellipse cx="14" cy="5.500" rx="1.500" ry="2" fill="#fff" />
    <path d="M8 8.500h8l-4 2zM3 22c2-3 5-2 7 0 0 2-6 2-7 0zM14 22c2-2 5-3 7 0-1 2-7 2-7 0z" fill="#f5a51c" />
  </>
);

const Taskbar = () => (
  <div className="flex h-[60px] shrink-0 bg-[linear-gradient(90deg,#26343b_0%,#28353b_45%,#2b2b2c_70%,#1e2c33_84%,#1f2e35_100%)] text-[18px] text-white">
    <button aria-label="开始" className="flex w-[73px] items-center justify-center">
      <svg viewBox="0 0 24 24" className="size-6" fill="#fff" aria-hidden="true">
        <path d="M0 4l10-2v9H0zM11 2l13-2v11H11zM0 12h10v9L0 20zM11 12h13v12l-13-2z" />
      </svg>
    </button>
    <button aria-label="搜索" className="mr-[6px] flex w-[76px] items-center justify-center">
      <svg viewBox="0 0 32 32" className="size-8" fill="#fff" aria-hidden="true">
        <path d="M15 15C7 18 0 15 0 8c0-5 5-8 9-7 6 0 9 0 7 5-3 3-3 6-1 9z" />
        <path d="M16 14c-3-8 0-14 7-14 5 0 8 3 9 9 0 6-1 8-6 7-4-3-7-4-10-2z" />
        <path d="M17 16c8-3 15 0 15 8 0 5-4 8-9 8-6 0-9-2-6-6 3-4 3-7 0-10z" />
        <path d="M15 17c3 8 0 15-7 15-5 0-8-4-8-9 0-6 2-8 6-6 4 3 6 3 9 0z" />
      </svg>
    </button>
    {taskApps.map((app) => (
      <button key={app.name} aria-label={app.name} className="flex w-[75px] flex-col items-center">
        <span className="flex flex-1 items-center">
          <Icon className="size-[34px]" box="0 0 34 34">
            {app.icon}
          </Icon>
        </span>
        <span className={`h-[3px] w-[61px] ${app.running ? "bg-[#76b3ea]" : ""}`} />
      </button>
    ))}
    <button aria-label="WPS Office" className="ml-[2px] flex w-[73px] flex-col items-center bg-[#4f595f]">
      <span className="flex flex-1 items-center">
        <svg viewBox="0 0 36 28" className="h-7 w-9" aria-hidden="true">
          <path d="M0 0h30v6l-4 22h-6l-3-9-3 9H9z" fill="#f5200f" />
          <path d="M36 0H25L10 28h8l7-16 1 16h1z" fill="#ff4a22" />
          <path d="M12 6l5 9 3-8z" fill="#4f595f" />
        </svg>
      </span>
      <span className="h-[3px] w-full bg-[#76b3ea]" />
    </button>

    <div className="ml-auto flex items-center">
      <div className="relative w-[72px] pb-1 text-center leading-6 whitespace-nowrap">
        <div>71°C</div>
        <div>CPU温度</div>
        <Icon className="absolute top-3 left-[18px] h-6 w-9" box="0 0 36 24">
          <path d="M1 1h22v21H1zM6 8h10v13H6zM1 4h22M23 5h11v17H20M27 10v8h-6" strokeWidth="2" />
        </Icon>
      </div>
      {trayIcons.map((item) => (
        <button key={item.name} aria-label={item.name} className="flex h-full w-9 items-center justify-center">
          <svg viewBox="0 0 24 24" className="size-6" aria-hidden="true">
            {item.icon === "penguin" ? <Penguin /> : item.icon}
          </svg>
        </button>
      ))}
      <button className="w-9">中</button>
      <button aria-label="QQ浏览器" className="flex w-12 justify-center">
        <svg viewBox="0 0 24 24" className="size-6" aria-hidden="true">
          <rect width="24" height="24" rx="4" fill="#2f80ff" />
          <circle cx="12" cy="12" r="6" fill="none" stroke="#fff" strokeWidth="3" />
          <path d="M14 14l4 5" stroke="#fff" strokeWidth="3" />
          <circle cx="18" cy="18" r="2" fill="#63d66e" />
        </svg>
      </button>
      <div className="w-[120px] pb-[2px] text-center leading-6">
        <div>17:35 周六</div>
        <div>2021/8/28</div>
      </div>
      <button aria-label="通知" className="flex w-[54px] justify-center">
        <Icon>
          <path d="M5 1h18v22H5zM5 4H1v19h4M9 7h11M9 12h11M9 17h7" />
        </Icon>
      </button>
      <div className="ml-[5px] h-full w-[7px] border-l border-[#7a8387]" />
    </div>
  </div>
);

const Mascot = () => (
  <svg viewBox="0 0 74 74" className="absolute right-px bottom-[61px] z-20 size-[74px]" aria-hidden="true">
    <circle cx="37" cy="37" r="35.500" fill="#f1f2f5" stroke="#2f87ef" strokeWidth="3" />
    <path d="M11 50C9 28 20 13 36 13s28 15 27 37z" fill="#d0d2d6" />
    <ellipse cx="31" cy="30" rx="6" ry="8" fill="#fff" />
    <ellipse cx="44" cy="30" rx="6" ry="8" fill="#fff" />
    <circle cx="33" cy="30" r="2.500" fill="#85888e" />
    <path d="M41 31c2-2 5-2 6 0" stroke="#85888e" strokeWidth="1.500" fill="none" />
    <ellipse cx="37" cy="43" rx="17" ry="4" fill="#fff" />
    <path d="M9 47c18 5 36 5 56 0v10c-17 5-39 5-54 1z" fill="#b9bbc0" />
    <path d="M20 58h12v12c-5-1-8-3-12-5z" fill="#b9bbc0" />
  </svg>
);

const meterBars = Array.from({ length: 24 }, (_, i) =>
  i < 9 ? "bg-[#33363f]" : i < 16 ? "bg-[#a9c46a]" : "bg-[#4fb892]"
);

const LevelMeter = () => (
  <div className="absolute top-[148px] right-0 z-20 flex h-[89px] w-[15px] flex-col justify-center gap-[2px] rounded-l bg-[#4b4d5a] pr-1 pl-[5px]">
    {meterBars.map((bar, i) => (
      <span key={i} className={`h-px ${bar}`} />
    ))}
  </div>
);

export default function App() {
  return (
    <div className="relative flex h-screen flex-col overflow-hidden font-['Noto_Sans','Noto_Sans_CJK_SC',sans-serif]">
      <TitleBar />
      <MenuBar />
      <Ribbon />
      <HorizontalRuler />
      <Workspace />
      <StatusBar />
      <Taskbar />
      <LevelMeter />
      <Mascot />
    </div>
  );
}
